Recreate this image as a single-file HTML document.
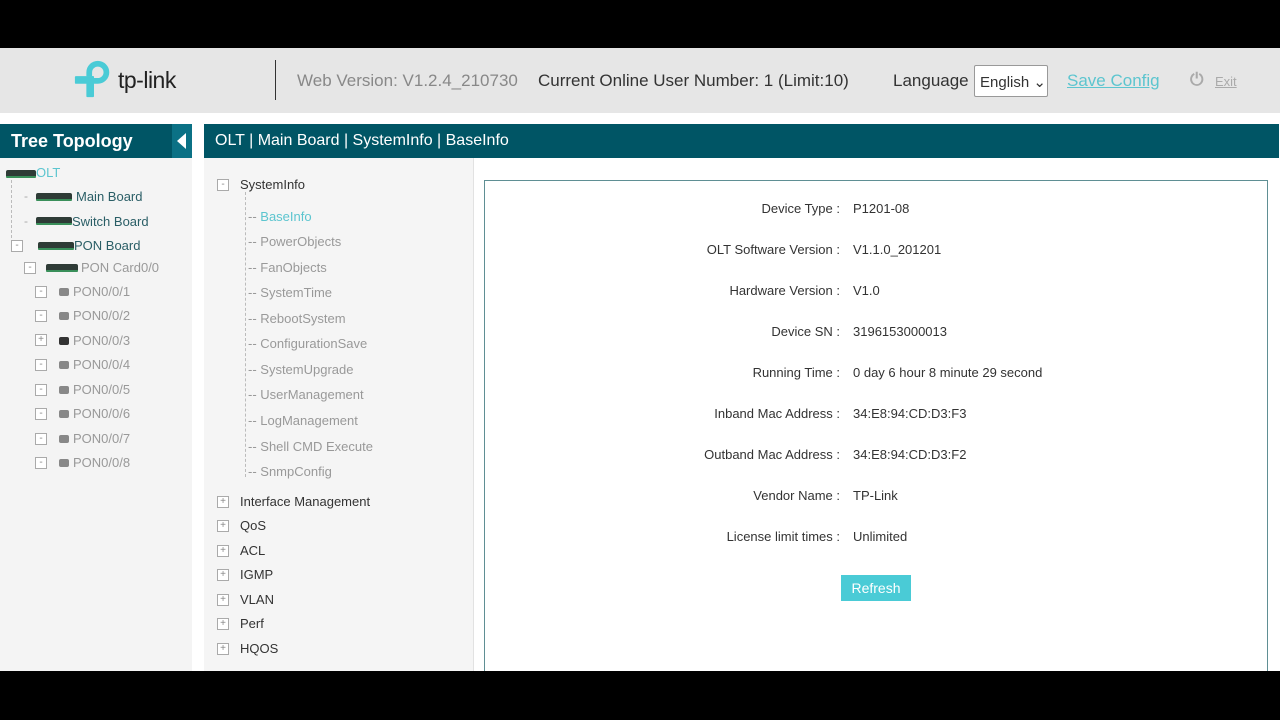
<!DOCTYPE html>
<html><head><meta charset="utf-8"><style>
*{margin:0;padding:0;box-sizing:border-box}
body{width:1280px;height:720px;background:#fff;font-family:"Liberation Sans",sans-serif;position:relative;overflow:hidden;color:#333}
.a{position:absolute;white-space:nowrap}
.blk{background:#000;left:0;width:1280px}
.bar{background:#005565;color:#fff;height:34px;top:124px}
.box{width:12px;height:12px;border:1px solid #aaa;background:#fff;font-size:10px;line-height:9px;text-align:center;color:#888}
.dev{height:8px;background:#2e3b36;border-radius:2px 2px 1px 1px;border-bottom:2px solid #3a8f5a}
.pn{font-size:13px;color:#999}
.pi{width:10px;height:8px;background:#888;border-radius:2px}
.sub{font-size:13px;color:#999}
.lbl{font-size:13px;color:#333;text-align:right;width:340px;left:500px}
.val{font-size:13px;color:#333;left:853px}
.vl{border-left:1px dashed #bbb;width:0}
</style></head><body>
<div class="a blk" style="top:0;height:48px"></div>
<div class="a" style="top:48px;left:0;width:1280px;height:65px;background:#e6e6e6"></div>
<svg class="a" style="left:73px;top:58px" width="42" height="42" viewBox="0 0 44 42">
<path d="M14 18 V14 A12 12 0 1 1 26 26 H22 V20 H26 A6 6 0 1 0 20 14 V18 Z" fill="#4acbd6"/>
<rect x="2" y="18" width="20" height="8" rx="1" fill="#4acbd6"/>
<rect x="14" y="18" width="8" height="22" rx="1" fill="#4acbd6"/>
</svg>
<div class="a" style="left:118px;top:67px;font-size:23px;color:#222;letter-spacing:-0.5px">tp-link</div>
<div class="a" style="left:275px;top:60px;width:1px;height:40px;background:#333"></div>
<div class="a" style="left:297px;top:71px;font-size:17px;color:#888">Web Version: V1.2.4_210730</div>
<div class="a" style="left:538px;top:71px;font-size:17px;color:#333">Current Online User Number: 1 (Limit:10)</div>
<div class="a" style="left:893px;top:71px;font-size:17px;color:#333">Language</div>
<div class="a" style="left:974px;top:65px;width:74px;height:32px;background:#fff;border:1px solid #999;border-radius:2px;font-size:15px;padding:7px 5px">English ⌄</div>
<div class="a" style="left:1067px;top:71px;font-size:17px;color:#5cc5cf;text-decoration:underline">Save Config</div>
<div class="a" style="left:1190px;top:70px;font-size:17px;color:#aaa;font-weight:bold">⏻</div>
<div class="a" style="left:1215px;top:74px;font-size:13px;color:#aaa;text-decoration:underline">Exit</div>

<div class="a bar" style="left:0;width:192px;font-weight:bold;font-size:18px;padding:7px 11px">Tree Topology</div>
<div class="a" style="left:172px;top:124px;width:20px;height:34px;background:#0b7185"></div>
<div class="a" style="left:177px;top:133px;width:0;height:0;border-top:8px solid transparent;border-bottom:8px solid transparent;border-right:9px solid #fff"></div>
<div class="a bar" style="left:204px;width:1075px;font-size:16px;padding:8px 11px">OLT | Main Board | SystemInfo | BaseInfo</div>

<div class="a" style="left:0;top:158px;width:192px;height:513px;background:#f4f4f4"></div>
<div class="a" style="left:204px;top:158px;width:269px;height:513px;background:#f5f5f5"></div>
<div class="a" style="left:473px;top:158px;width:1px;height:513px;background:#e2e2e2"></div>
<div class="a" style="left:484px;top:180px;width:784px;height:500px;border:1px solid #5f8f94;background:#fff"></div>

<div class="a dev" style="left:6px;top:170px;width:30px"></div>
<div class="a" style="left:36px;top:165px;font-size:13px;color:#5cc5cf">OLT</div>
<div class="a vl" style="left:11px;top:180px;height:58px"></div>
<div class="a" style="left:24px;top:189px;font-size:12px;color:#aaa">-</div>
<div class="a dev" style="left:36px;top:193px;width:36px"></div>
<div class="a" style="left:76px;top:189px;font-size:13px;color:#2a5e66">Main Board</div>
<div class="a" style="left:24px;top:214px;font-size:12px;color:#aaa">-</div>
<div class="a dev" style="left:36px;top:217px;width:36px"></div>
<div class="a" style="left:72px;top:214px;font-size:13px;color:#2a5e66">Switch Board</div>
<div class="a box" style="left:11px;top:240px">-</div>
<div class="a dev" style="left:38px;top:242px;width:36px"></div>
<div class="a" style="left:74px;top:238px;font-size:13px;color:#2a5e66">PON Board</div>
<div class="a box" style="left:24px;top:262px">-</div>
<div class="a dev" style="left:46px;top:264px;width:32px"></div>
<div class="a pn" style="left:81px;top:260px">PON Card0/0</div>
<div class="a box" style="left:35px;top:286px">-</div><div class="a pi" style="left:59px;top:288px"></div><div class="a pn" style="left:73px;top:284px">PON0/0/1</div>
<div class="a box" style="left:35px;top:310px">-</div><div class="a pi" style="left:59px;top:312px"></div><div class="a pn" style="left:73px;top:308px">PON0/0/2</div>
<div class="a box" style="left:35px;top:334px">+</div><div class="a pi" style="left:59px;top:337px;background:#333"></div><div class="a pn" style="left:73px;top:333px">PON0/0/3</div>
<div class="a box" style="left:35px;top:359px">-</div><div class="a pi" style="left:59px;top:361px"></div><div class="a pn" style="left:73px;top:357px">PON0/0/4</div>
<div class="a box" style="left:35px;top:384px">-</div><div class="a pi" style="left:59px;top:386px"></div><div class="a pn" style="left:73px;top:382px">PON0/0/5</div>
<div class="a box" style="left:35px;top:408px">-</div><div class="a pi" style="left:59px;top:410px"></div><div class="a pn" style="left:73px;top:406px">PON0/0/6</div>
<div class="a box" style="left:35px;top:433px">-</div><div class="a pi" style="left:59px;top:435px"></div><div class="a pn" style="left:73px;top:431px">PON0/0/7</div>
<div class="a box" style="left:35px;top:457px">-</div><div class="a pi" style="left:59px;top:459px"></div><div class="a pn" style="left:73px;top:455px">PON0/0/8</div>

<div class="a box" style="left:217px;top:179px">-</div>
<div class="a" style="left:240px;top:177px;font-size:13px;color:#333">SystemInfo</div>
<div class="a vl" style="left:245px;top:192px;height:285px"></div>
<div class="a sub" style="left:248px;top:209px">-- <span style="color:#5cc5cf">BaseInfo</span></div>
<div class="a sub" style="left:248px;top:234px">-- PowerObjects</div>
<div class="a sub" style="left:248px;top:260px">-- FanObjects</div>
<div class="a sub" style="left:248px;top:285px">-- SystemTime</div>
<div class="a sub" style="left:248px;top:311px">-- RebootSystem</div>
<div class="a sub" style="left:248px;top:336px">-- ConfigurationSave</div>
<div class="a sub" style="left:248px;top:362px">-- SystemUpgrade</div>
<div class="a sub" style="left:248px;top:387px">-- UserManagement</div>
<div class="a sub" style="left:248px;top:413px">-- LogManagement</div>
<div class="a sub" style="left:248px;top:439px">-- Shell CMD Execute</div>
<div class="a sub" style="left:248px;top:464px">-- SnmpConfig</div>
<div class="a box" style="left:217px;top:496px">+</div><div class="a" style="left:240px;top:494px;font-size:13px">Interface Management</div>
<div class="a box" style="left:217px;top:520px">+</div><div class="a" style="left:240px;top:518px;font-size:13px">QoS</div>
<div class="a box" style="left:217px;top:545px">+</div><div class="a" style="left:240px;top:543px;font-size:13px">ACL</div>
<div class="a box" style="left:217px;top:569px">+</div><div class="a" style="left:240px;top:567px;font-size:13px">IGMP</div>
<div class="a box" style="left:217px;top:594px">+</div><div class="a" style="left:240px;top:592px;font-size:13px">VLAN</div>
<div class="a box" style="left:217px;top:618px">+</div><div class="a" style="left:240px;top:616px;font-size:13px">Perf</div>
<div class="a box" style="left:217px;top:643px">+</div><div class="a" style="left:240px;top:641px;font-size:13px">HQOS</div>

<div class="a lbl" style="top:201px">Device Type :</div><div class="a val" style="top:201px">P1201-08</div>
<div class="a lbl" style="top:242px">OLT Software Version :</div><div class="a val" style="top:242px">V1.1.0_201201</div>
<div class="a lbl" style="top:283px">Hardware Version :</div><div class="a val" style="top:283px">V1.0</div>
<div class="a lbl" style="top:324px">Device SN :</div><div class="a val" style="top:324px">3196153000013</div>
<div class="a lbl" style="top:365px">Running Time :</div><div class="a val" style="top:365px">0 day 6 hour 8 minute 29 second</div>
<div class="a lbl" style="top:406px">Inband Mac Address :</div><div class="a val" style="top:406px">34:E8:94:CD:D3:F3</div>
<div class="a lbl" style="top:447px">Outband Mac Address :</div><div class="a val" style="top:447px">34:E8:94:CD:D3:F2</div>
<div class="a lbl" style="top:488px">Vendor Name :</div><div class="a val" style="top:488px">TP-Link</div>
<div class="a lbl" style="top:529px">License limit times :</div><div class="a val" style="top:529px">Unlimited</div>
<div class="a" style="left:841px;top:575px;width:70px;height:26px;background:#4acbd6;color:#fff;font-size:14px;text-align:center;line-height:26px">Refresh</div>

<div class="a blk" style="top:671px;height:49px"></div>
</body></html>
